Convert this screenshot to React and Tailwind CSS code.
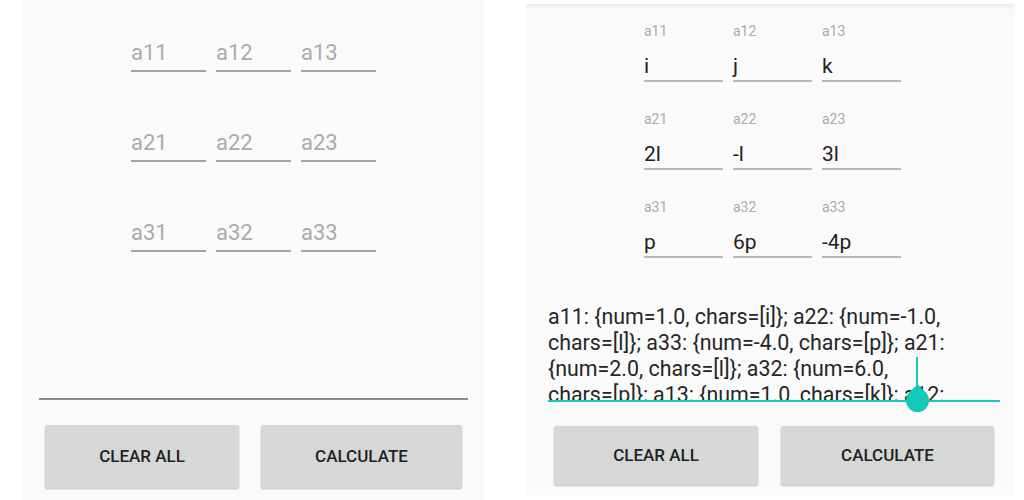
import React from 'react';

const leftRows = [
    ['a11', 'a12', 'a13'],
    ['a21', 'a22', 'a23'],
    ['a31', 'a32', 'a33'],
];

const rightRows = [
    [['a11', 'i'], ['a12', 'j'], ['a13', 'k']],
    [['a21', '2l'], ['a22', '-l'], ['a23', '3l']],
    [['a31', 'p'], ['a32', '6p'], ['a33', '-4p']],
];

const resultLines = [
    'a11: {num=1.0, chars=[i]}; a22: {num=-1.0,',
    'chars=[l]}; a33: {num=-4.0, chars=[p]}; a21:',
    '{num=2.0, chars=[l]}; a32: {num=6.0,',
    'chars=[p]}; a13: {num=1.0, chars=[k]}; a12:',
];

const font = { fontFamily: 'Roboto, "Noto Sans", sans-serif' };

const App = () => {
    return (
        <div className="flex w-[1024px] h-[500px] bg-white overflow-hidden" style={font}>
            {/* Pantalla vacía */}
            <div className="ml-[23px] w-[461px] h-[500px] bg-[#fafafa] flex flex-col">
                <div className="flex flex-col gap-[52px] pt-[34px] items-center">
                    {leftRows.map((row, i) => (
                        <div key={i} className="flex gap-[10px]">
                            {row.map((hint) => (
                                <div
                                    key={hint}
                                    className="w-[75px] h-[38px] pt-[5px] border-b-2 border-[#a3a3a3] text-[22px] leading-[28px] text-[#ababab]"
                                >
                                    {hint}
                                </div>
                            ))}
                        </div>
                    ))}
                </div>
                <div className="mt-[146px] mx-[16px] h-[2px] bg-[#8a8a8a]" />
                <div className="flex mt-[25px] pl-[22px] gap-[22px]">
                    <button className="w-[194px] h-[63px] bg-[#d6d7d7] rounded-[2px] shadow-[0_1px_2px_rgba(0,0,0,0.25)] text-[17px] font-medium text-[#222]">
                        CLEAR ALL
                    </button>
                    <button className="w-[201px] h-[63px] bg-[#d6d7d7] rounded-[2px] shadow-[0_1px_2px_rgba(0,0,0,0.25)] text-[17px] font-medium text-[#222]">
                        CALCULATE
                    </button>
                </div>
            </div>

            {/* Pantalla con resultado */}
            <div className="ml-[42px] mt-[4px] w-[489px] h-[491px] bg-[#fafafa] flex flex-col relative">
                <div className="absolute top-0 left-0 right-0 h-[6px] bg-gradient-to-b from-[#ececec] to-[#fafafa]" />
                <div className="flex flex-col gap-[28px] pt-[18px] pl-[118px]">
                    {rightRows.map((row, i) => (
                        <div key={i} className="flex gap-[10px]">
                            {row.map(([hint, value]) => (
                                <div key={hint} className="w-[79px] flex flex-col border-b-2 border-[#b8b8b8]">
                                    <span className="text-[14px] leading-[18px] text-[#ababab]">{hint}</span>
                                    <span className="mt-[12px] text-[21px] leading-[28px] text-[#222]">{value}</span>
                                </div>
                            ))}
                        </div>
                    ))}
                </div>
                <div className="mt-[46px] ml-[22px] w-[452px] relative">
                    <div className="h-[96px] overflow-hidden text-[21.4px] leading-[26px] text-[#262626]">
                        {resultLines.map((line, i) => (
                            <div key={i} className="whitespace-nowrap">{line}</div>
                        ))}
                    </div>
                    <div className="h-[2px] bg-[#14c9b8]" />
                    {/* Cursor y manija */}
                    <div className="absolute left-[368px] top-[53px] w-[2px] h-[36px] bg-[#14c9b8]" />
                    <div className="absolute left-[358px] top-[85px] w-[23px] h-[23px] bg-[#14c9b8] rounded-full rounded-tl-none rotate-45" />
                </div>
                <div className="flex mt-[24px] pl-[28px] gap-[23px]">
                    <button className="w-[204px] h-[59px] bg-[#d6d7d7] rounded-[2px] shadow-[0_1px_2px_rgba(0,0,0,0.25)] text-[17px] font-medium text-[#222]">
                        CLEAR ALL
                    </button>
                    <button className="w-[213px] h-[59px] bg-[#d6d7d7] rounded-[2px] shadow-[0_1px_2px_rgba(0,0,0,0.25)] text-[17px] font-medium text-[#222]">
                        CALCULATE
                    </button>
                </div>
            </div>
        </div>
    );
};

export default App;
